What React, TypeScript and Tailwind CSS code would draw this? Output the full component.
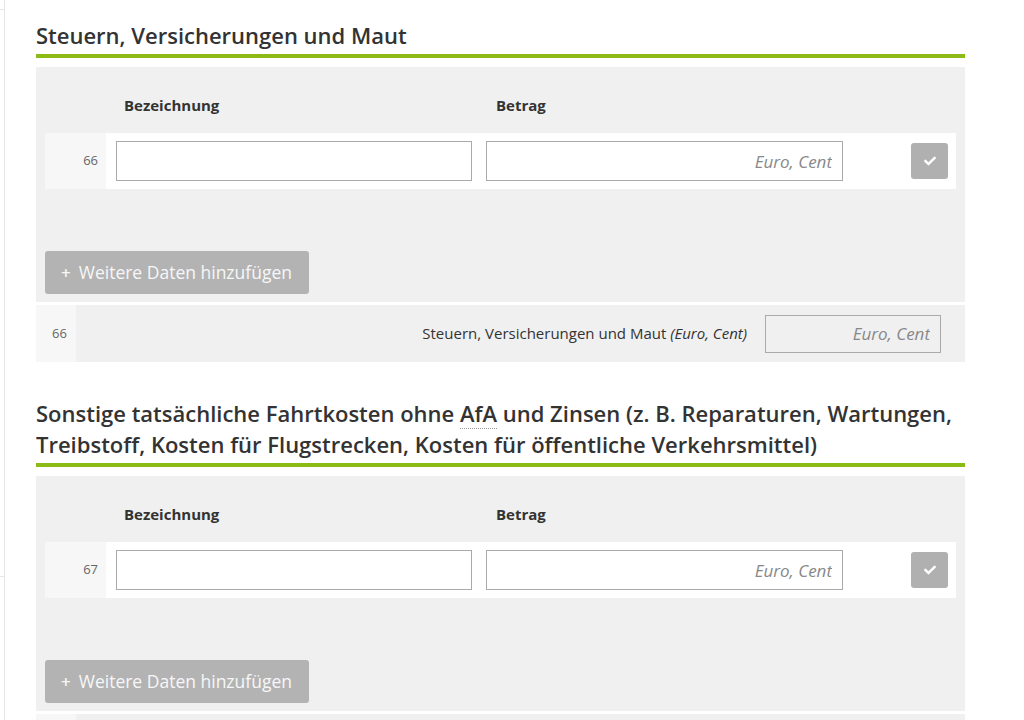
import { Fragment } from "react";

const FONT = { fontFamily: '"Open Sans", "Liberation Sans", sans-serif' };

function CheckIcon() {
  return (
    <svg width="12" height="12" viewBox="0 0 512 512" fill="currentColor">
      <path d="M173.898 439.404l-166.4-166.4c-9.997-9.997-9.997-26.206 0-36.204l36.203-36.204c9.997-9.998 26.207-9.998 36.204 0L192 312.69 432.095 72.596c9.997-9.997 26.207-9.997 36.204 0l36.203 36.204c9.997 9.997 9.997 26.206 0 36.204l-294.4 294.401c-9.998 9.997-26.207 9.997-36.204-.001z" />
    </svg>
  );
}

function Section({
  title,
  nr,
  summary,
}: {
  title: React.ReactNode;
  nr: string;
  summary: string;
}) {
  return (
    <section className="w-[929px] shrink-0">
      <h2 className="border-b-4 border-[#8dbb15] pb-[3px] text-[22px] font-semibold leading-[31px] text-[#333]">
        {title}
      </h2>

      <div className="mt-[9px] bg-[#f0f0f0] px-[9px] pb-[8px]">
        <div className="flex pt-[28px] pb-[18px] text-[15px] font-bold leading-[20px] text-[#333]">
          <div className="w-[79px]" />
          <div className="w-[372px]">Bezeichnung</div>
          <div>Betrag</div>
        </div>

        <div className="flex h-[56px] items-center bg-white">
          <div className="flex h-full w-[61px] items-center justify-end bg-[#f7f7f7] pr-[8px] text-[13px] text-[#666]">
            {nr}
          </div>
          <input
            className="ml-[10px] h-[40px] w-[356px] border border-[#aaa] bg-white px-2 outline-none"
            style={FONT}
          />
          <input
            placeholder="Euro, Cent"
            className="ml-[14px] h-[40px] w-[357px] border border-[#aaa] bg-white px-[10px] text-right text-[17px] outline-none placeholder:italic placeholder:text-[#888]"
            style={FONT}
          />
          <button className="ml-auto mr-[8px] flex h-[36px] w-[37px] items-center justify-center rounded-[3px] bg-[#b0b0b0] text-white">
            <CheckIcon />
          </button>
        </div>

        <button
          className="mt-[62px] flex h-[43px] items-center gap-[8px] rounded-[3px] bg-[#b3b3b3] pl-[16px] pr-[17px] text-[17.5px] text-[#f7f7f7]"
          style={FONT}
        >
          <span className="text-[17px] font-semibold">+</span>
          <span>Weitere Daten hinzufügen</span>
        </button>
      </div>

      <div className="mt-[3px] flex h-[57px] items-center bg-[#f0f0f0]">
        <div className="flex h-full w-[40px] items-center bg-[#f7f7f7] pl-[16px] text-[13px] text-[#666]">
          {nr}
        </div>
        <div className="flex-1 pr-[18px] text-right text-[15px] text-[#333]">
          {summary} <i>(Euro, Cent)</i>
        </div>
        <input
          disabled
          placeholder="Euro, Cent"
          className="mr-[24px] h-[38px] w-[176px] border border-[#aaa] bg-[#f0f0f0] px-[10px] text-right text-[17px] placeholder:italic placeholder:text-[#888]"
          style={FONT}
        />
      </div>
    </section>
  );
}

export default function App() {
  return (
    <div className="flex h-[720px] overflow-hidden bg-white" style={FONT}>
      <div className="w-[5px] shrink-0 border-r border-[#e6e6e6]">
        <div className="h-[10px] border-b border-[#e6e6e6]" />
        <div className="h-[567px] border-b border-[#e6e6e6]" />
      </div>
      <main className="flex flex-col gap-[36px] pl-[31px] pt-[20px]">
        <Section title="Steuern, Versicherungen und Maut" nr="66" summary="Steuern, Versicherungen und Maut" />
        <Section
          nr="67"
          summary="Sonstige tatsächliche Fahrtkosten"
          title={
            <Fragment>
              Sonstige tatsächliche Fahrtkosten ohne{" "}
              <abbr className="border-b border-dotted border-[#999] no-underline">AfA</abbr> und Zinsen (z. B.
              Reparaturen, Wartungen, Treibstoff, Kosten für Flugstrecken, Kosten für öffentliche Verkehrsmittel)
            </Fragment>
          }
        />
      </main>
    </div>
  );
}
